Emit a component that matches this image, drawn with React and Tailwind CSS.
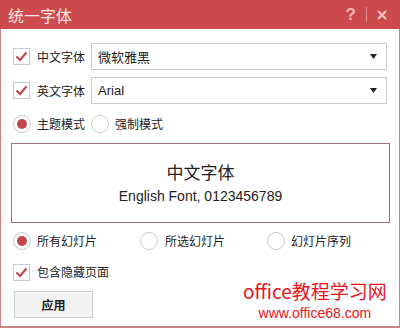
import React from "react";

const CJK = { fontFamily: '"Microsoft YaHei","Noto Sans CJK SC",sans-serif' };
const ARIAL = { fontFamily: '"Liberation Sans","Noto Sans CJK SC",sans-serif' };

function Check() {
  return (
    <div className="w-[17px] h-[17px] border border-[#c9c9c9] bg-white flex items-center justify-center shrink-0">
      <svg width="13" height="11" viewBox="0 0 13 11">
        <path d="M1.5 5.5 L5 9 L11.5 1.5" fill="none" stroke="#c4454b" strokeWidth="2.2" />
      </svg>
    </div>
  );
}

function Radio({ on }) {
  return (
    <div className="w-[18px] h-[18px] rounded-full border border-[#c9c9c9] bg-white flex items-center justify-center shrink-0">
      {on && <div className="w-[10px] h-[10px] rounded-full bg-[#c4454b]" />}
    </div>
  );
}

function Select({ value, font }) {
  return (
    <div className="ml-[6px] flex-1 h-[27px] border border-[#cbcbcb] bg-white flex items-center pl-[6px] pr-[9px]">
      <span className="flex-1 text-[13px] text-[#222]" style={font}>{value}</span>
      <svg width="7" height="5" viewBox="0 0 7 5"><path d="M0 0 H7 L3.5 5 Z" fill="#222" /></svg>
    </div>
  );
}

export default function App() {
  return (
    <div className="relative w-[400px] h-[328px] bg-white flex flex-col overflow-hidden" style={CJK}>
      <div className="h-[29px] bg-[#cd4a4c] flex items-center pl-[8px] pr-[12px] shrink-0">
        <span className="text-[16px] text-[#fbe6e6] flex-1 leading-none">统一字体</span>
        <span className="text-[17px] font-bold text-[#f1b3b3] leading-none" style={ARIAL}>?</span>
        <div className="w-px h-[15px] bg-[#e08b8c] mx-[10px]" />
        <svg width="10" height="10" viewBox="0 0 10 10" className="mr-[1px]">
          <path d="M1 1 L9 9 M9 1 L1 9" stroke="#f6c7c7" strokeWidth="2" />
        </svg>
      </div>
      <div className="flex-1 flex flex-col border-x border-b-2 border-[#c98585] pl-[12px] pr-[12px]">
        <div className="flex items-center mt-[14px] h-[27px]">
          <Check />
          <span className="ml-[7px] text-[12px] text-[#222]">中文字体</span>
          <Select value="微软雅黑" font={CJK} />
        </div>
        <div className="flex items-center mt-[7px] h-[27px]">
          <Check />
          <span className="ml-[7px] text-[12px] text-[#222]">英文字体</span>
          <Select value="Arial" font={ARIAL} />
        </div>
        <div className="flex items-center mt-[7px] h-[26px]">
          <Radio on />
          <span className="ml-[6px] text-[12px] text-[#222]">主题模式</span>
          <div className="ml-[6px]"><Radio /></div>
          <span className="ml-[6px] text-[12px] text-[#222]">强制模式</span>
        </div>
        <div className="mt-[6px] -ml-[2px] mr-[-3px] h-[80px] border border-[#a07474] flex flex-col items-center justify-center">
          <div className="text-[17px] text-[#222] leading-[22px] mt-[1px]">中文字体</div>
          <div className="text-[14px] text-[#222] leading-[20px] mt-[3px]" style={ARIAL}>English Font, 0123456789</div>
        </div>
        <div className="flex items-center mt-[8px] h-[20px]">
          <Radio on />
          <span className="ml-[6px] text-[12px] text-[#222] w-[103px]">所有幻灯片</span>
          <Radio />
          <span className="ml-[7px] text-[12px] text-[#222] w-[102px]">所选幻灯片</span>
          <Radio />
          <span className="ml-[6px] text-[12px] text-[#222]">幻灯片序列</span>
        </div>
        <div className="flex items-center mt-[11px] h-[20px]">
          <Check />
          <span className="ml-[7px] text-[12px] text-[#222]">包含隐藏页面</span>
        </div>
        <div className="mt-[9px] ml-[1px] w-[79px] h-[27px] border border-[#cfcfcf] bg-[#f2f2f2] flex items-center justify-center text-[12px] font-bold text-[#222]">
          应用
        </div>
      </div>
      <div className="absolute left-[243px] top-[279px] flex flex-col items-center">
        <div className="text-[19px] leading-[24px] text-[#e8141c]">office教程学习网</div>
        <div className="text-[14px] leading-[18px] text-[#e8141c] mt-[1px]" style={ARIAL}>www.office68.com</div>
      </div>
    </div>
  );
}
